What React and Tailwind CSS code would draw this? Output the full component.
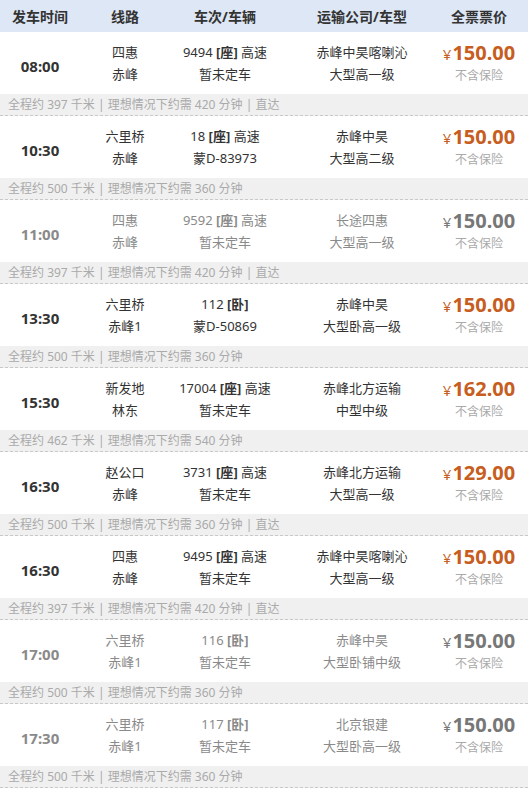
import React from 'react';

const rows = [
  { time: '08:00', from: '四惠', to: '赤峰', no: '9494', kind: '座', tag: '高速', car: '暂未定车', co: '赤峰中昊喀喇沁', type: '大型高一级', price: '150.00', km: 397, min: 420, direct: true },
  { time: '10:30', from: '六里桥', to: '赤峰', no: '18', kind: '座', tag: '高速', car: '蒙D-83973', co: '赤峰中昊', type: '大型高二级', price: '150.00', km: 500, min: 360 },
  { time: '11:00', from: '四惠', to: '赤峰', no: '9592', kind: '座', tag: '高速', car: '暂未定车', co: '长途四惠', type: '大型高一级', price: '150.00', km: 397, min: 420, direct: true, off: true },
  { time: '13:30', from: '六里桥', to: '赤峰1', no: '112', kind: '卧', car: '蒙D-50869', co: '赤峰中昊', type: '大型卧高一级', price: '150.00', km: 500, min: 360 },
  { time: '15:30', from: '新发地', to: '林东', no: '17004', kind: '座', tag: '高速', car: '暂未定车', co: '赤峰北方运输', type: '中型中级', price: '162.00', km: 462, min: 540 },
  { time: '16:30', from: '赵公口', to: '赤峰', no: '3731', kind: '座', tag: '高速', car: '暂未定车', co: '赤峰北方运输', type: '大型高一级', price: '129.00', km: 500, min: 360, direct: true },
  { time: '16:30', from: '四惠', to: '赤峰', no: '9495', kind: '座', tag: '高速', car: '暂未定车', co: '赤峰中昊喀喇沁', type: '大型高一级', price: '150.00', km: 397, min: 420, direct: true },
  { time: '17:00', from: '六里桥', to: '赤峰1', no: '116', kind: '卧', car: '暂未定车', co: '赤峰中昊', type: '大型卧铺中级', price: '150.00', km: 500, min: 360, off: true },
  { time: '17:30', from: '六里桥', to: '赤峰1', no: '117', kind: '卧', car: '暂未定车', co: '北京银建', type: '大型卧高一级', price: '150.00', km: 500, min: 360, off: true },
];

const font = { fontFamily: '"Noto Sans", "Noto Sans CJK SC", sans-serif' };

function Row({ r }) {
  const txt = r.off ? 'text-[#8a8a8a]' : 'text-[#333]';
  return (
    <div>
      <div className={`flex h-[62px] items-center text-[13px] ${txt}`}>
        <div className="w-[80px] pt-[6px] text-center text-[15px] font-bold">{r.time}</div>
        <div className="w-[90px] flex flex-col items-center gap-[2px] leading-[20px]">
          <span>{r.from}</span>
          <span>{r.to}</span>
        </div>
        <div className="w-[110px] flex flex-col items-center gap-[2px] leading-[20px] whitespace-nowrap">
          <span>
            {r.no} <b className="font-bold">[{r.kind}]</b>{r.tag ? ` ${r.tag}` : ''}
          </span>
          <span>{r.car}</span>
        </div>
        <div className="w-[164px] flex flex-col items-center gap-[2px] leading-[20px]">
          <span>{r.co}</span>
          <span>{r.type}</span>
        </div>
        <div className="w-[84px] pr-[14px] flex flex-col items-center gap-[1px]">
          <span className={`whitespace-nowrap leading-[22px] ${r.off ? 'text-[#777]' : 'text-[#c75d1e]'}`}>
            <span className="text-[15px] mr-[1px]">¥</span>
            <span className="text-[20px] font-bold">{r.price}</span>
          </span>
          <span className="text-[12px] text-[#aaa] leading-[18px]">不含保险</span>
        </div>
      </div>
      <div className="h-[22px] bg-[#f0f0f0] border-b border-dashed border-[#c8c8c8] pl-[8px] text-[12px] leading-[21px] text-[#aaa] whitespace-nowrap">
        全程约 {r.km} 千米 | 理想情况下约需 {r.min} 分钟{r.direct ? ' | 直达' : ''}
      </div>
    </div>
  );
}

export default function App() {
  return (
    <div className="w-[528px] bg-white" style={font}>
      <div className="flex h-[32px] items-center bg-[#dde7f5] text-[14px] font-bold text-[#333]">
        <div className="w-[80px] text-center">发车时间</div>
        <div className="w-[90px] text-center">线路</div>
        <div className="w-[110px] text-center">车次/车辆</div>
        <div className="w-[164px] text-center">运输公司/车型</div>
        <div className="w-[84px] pr-[14px] text-center">全票票价</div>
      </div>
      {rows.map((r, i) => (
        <Row key={i} r={r} />
      ))}
    </div>
  );
}
